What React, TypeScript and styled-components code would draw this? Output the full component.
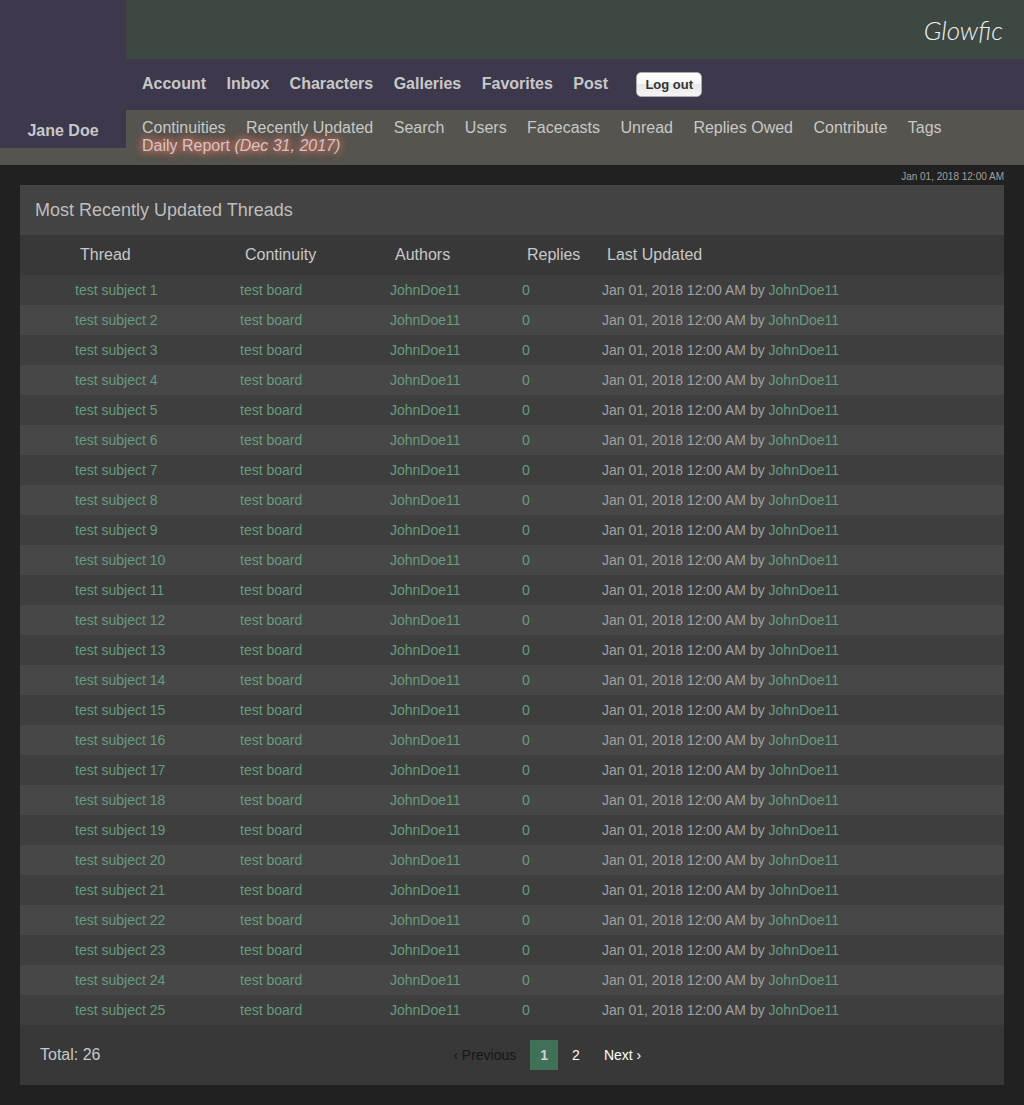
import React from 'react';
import styled, { createGlobalStyle } from 'styled-components';

const GlobalStyle = createGlobalStyle`
  *, *::before, *::after { box-sizing: border-box; }
  body {
    margin: 0;
    background: #212121;
    color: #c8c8c8;
    font-family: "Liberation Sans", Arial, sans-serif;
    font-size: 16px;
  }
  a { color: inherit; text-decoration: none; }
`;

const Page = styled.div`
  padding-bottom: 20px;
`;

const Header = styled.header`
  display: grid;
  grid-template-columns: 126px 1fr;
  align-items: start;
  background: #55544e;
`;

const UserBox = styled.div`
  display: flex;
  align-items: flex-end;
  justify-content: center;
  height: 148px;
  padding-bottom: 8px;
  background: #3e384d;
  font-weight: bold;
`;

const Banner = styled.div`
  display: flex;
  align-items: center;
  justify-content: flex-end;
  height: 59px;
  padding: 0 21px;
  background: #3c4841;
`;

const Logo = styled.a`
  color: #f0f0f0;
  font-family: Lato, "Liberation Sans", sans-serif;
  font-size: 26px;
  font-style: italic;
  font-weight: 300;
  line-height: 32px;
`;

const PrimaryNav = styled.nav`
  height: 51px;
  padding: 13px 16px;
  background: #3e384d;
  font-weight: bold;
`;

const SecondaryNav = styled.nav`
  padding: 9px 16px 10px;
  line-height: 18px;
`;

const NavLink = styled.a`
  display: inline-block;
  margin-right: 16px;
`;

const ReportLink = styled(NavLink)`
  text-shadow: 0 0 8px #ff7766, 0 0 8px #ff7766;
`;

const LogoutButton = styled.button`
  height: 25px;
  margin: 0 0 0 8px;
  padding: 0 8px;
  border: 1px solid #aaaaaa;
  border-radius: 5px;
  background: linear-gradient(#ffffff 0%, #f6f6f6 50%, #e9e9e9 50%, #f4f4f4 100%);
  color: #333333;
  font: bold 13px "Liberation Sans", Arial, sans-serif;
  cursor: pointer;
`;

const Timestamp = styled.div`
  height: 20px;
  padding: 6px 20px 0;
  color: #a0a0a0;
  font-size: 10px;
  line-height: 12px;
  text-align: right;
`;

const Content = styled.main`
  margin: 0 20px;
  background: #383838;
`;

const Title = styled.h1`
  margin: 0;
  padding: 0 15px;
  background: #434343;
  color: #bebebe;
  font-size: 18px;
  font-weight: normal;
  line-height: 50px;
`;

const ThreadTable = styled.table`
  width: 100%;
  border-collapse: collapse;
  table-layout: fixed;
`;

const HeadCell = styled.th<{ $width?: number }>`
  width: ${(p) => (p.$width ? `${p.$width}px` : 'auto')};
  height: 40px;
  padding: 0 10px;
  font-weight: normal;
  text-align: left;
`;

const Row = styled.tr`
  background: #3e3e3e;
  &:nth-child(even) { background: #474747; }
`;

const Cell = styled.td`
  height: 30px;
  padding: 0 5px;
  color: #a0a0a0;
  font-size: 14px;
`;

const GreenLink = styled.a`
  color: #669b7f;
`;

const Footer = styled.footer`
  display: flex;
  align-items: center;
  gap: 5px;
  height: 60px;
  padding: 0 15px 0 20px;
`;

const Pagination = styled.nav`
  display: flex;
  flex: 1;
  justify-content: center;
  gap: 4px;
  font-size: 14px;
  line-height: 30px;
`;

const PageLink = styled.a`
  padding: 0 10px;
  color: #ffffff;
`;

const DisabledPage = styled.span`
  padding: 0 10px;
  color: #161616;
`;

const CurrentPage = styled.em`
  padding: 0 10px;
  background: #407056;
  color: #d0d0d0;
  font-style: normal;
  font-weight: bold;
`;

const primaryLinks = ['Account', 'Inbox', 'Characters', 'Galleries', 'Favorites', 'Post'];
const secondaryLinks = [
  'Continuities', 'Recently Updated', 'Search', 'Users', 'Facecasts',
  'Unread', 'Replies Owed', 'Contribute', 'Tags',
];
const threads = Array.from({ length: 25 }, (_, i) => `test subject ${i + 1}`);

export default function App() {
  return (
    <Page>
      <GlobalStyle />
      <Header>
        <UserBox><a href="#user">Jane Doe</a></UserBox>
        <div>
          <Banner><Logo href="#home">Glowfic</Logo></Banner>
          <PrimaryNav aria-label="Account">
            {primaryLinks.map((label) => (
              <React.Fragment key={label}>
                <NavLink href="#nav">{label}</NavLink>{' '}
              </React.Fragment>
            ))}
            <LogoutButton type="button">Log out</LogoutButton>
          </PrimaryNav>
          <SecondaryNav aria-label="Site">
            {secondaryLinks.map((label) => (
              <React.Fragment key={label}>
                <NavLink href="#nav">{label}</NavLink>{' '}
              </React.Fragment>
            ))}
            <ReportLink href="#report">Daily Report <i>(Dec 31, 2017)</i></ReportLink>
          </SecondaryNav>
        </div>
      </Header>
      <Timestamp>Jan 01, 2018 12:00 AM</Timestamp>
      <Content>
        <Title>Most Recently Updated Threads</Title>
        <ThreadTable>
          <thead>
            <tr>
              <HeadCell $width={50} />
              <HeadCell $width={165}>Thread</HeadCell>
              <HeadCell $width={150}>Continuity</HeadCell>
              <HeadCell $width={132}>Authors</HeadCell>
              <HeadCell $width={80}>Replies</HeadCell>
              <HeadCell>Last Updated</HeadCell>
            </tr>
          </thead>
          <tbody>
            {threads.map((subject) => (
              <Row key={subject}>
                <Cell />
                <Cell><GreenLink href="#thread">{subject}</GreenLink></Cell>
                <Cell><GreenLink href="#board">test board</GreenLink></Cell>
                <Cell><GreenLink href="#author">JohnDoe11</GreenLink></Cell>
                <Cell><GreenLink href="#stats">0</GreenLink></Cell>
                <Cell>Jan 01, 2018 12:00 AM by <GreenLink href="#author">JohnDoe11</GreenLink></Cell>
              </Row>
            ))}
          </tbody>
        </ThreadTable>
        <Footer>
          <span>Total: 26</span>
          <Pagination aria-label="Pagination">
            <DisabledPage>‹ Previous</DisabledPage>
            <CurrentPage aria-current="page">1</CurrentPage>
            <PageLink href="#page-2">2</PageLink>
            <PageLink href="#page-2">Next ›</PageLink>
          </Pagination>
        </Footer>
      </Content>
    </Page>
  );
}
